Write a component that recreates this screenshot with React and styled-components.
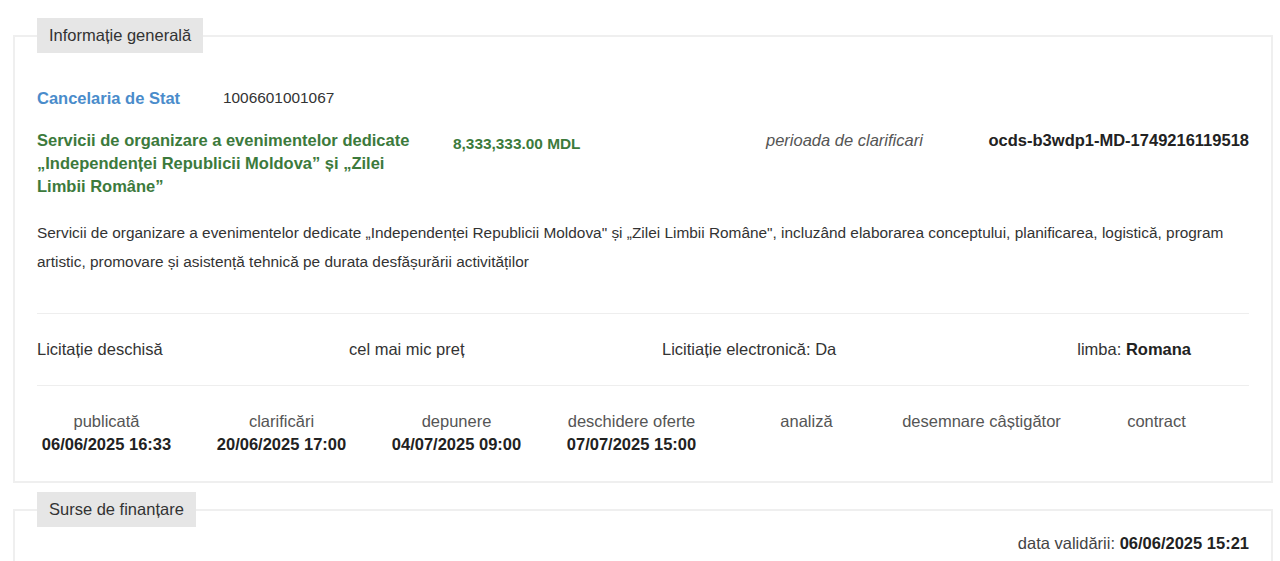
import React from "react";
import styled, { createGlobalStyle } from "styled-components";

const Global = createGlobalStyle`
  html, body { margin: 0; padding: 0; background: #fff; }
  body {
    font-family: "Liberation Sans", Arial, sans-serif;
    color: #333;
    font-size: 16.5px;
    overflow: hidden;
  }
`;

const Page = styled.div`
  padding: 18px 7px 0 13px;
  display: flex;
  flex-direction: column;
  gap: 9px;
`;

const Panel = styled.fieldset`
  margin: 0;
  min-width: 0;
  border: 2px solid #efefef;
  padding: ${(p) => p.$pad || "0 22px 25px 22px"};
`;

const Legend = styled.legend`
  background: #e6e6e6;
  color: #333;
  font-size: 16.5px;
  line-height: 19px;
  padding: 8px 12px;
  margin-left: 0;
`;

const OrgRow = styled.div`
  display: flex;
  align-items: center;
  margin-top: 34px;
  line-height: 22px;
`;

const OrgName = styled.a`
  color: #4a8ccb;
  font-weight: bold;
  text-decoration: none;
  width: 186px;
`;

const OrgCode = styled.span`
  color: #333;
  font-size: 15.4px;
`;

const TitleRow = styled.div`
  display: grid;
  grid-template-columns: 416px 313px 1fr auto;
  margin-top: 20px;
  line-height: 23px;
`;

const Title = styled.div`
  color: #3c7a3c;
  font-weight: bold;
  padding-right: 30px;
`;

const Amount = styled.div`
  color: #3c7a3c;
  font-weight: bold;
  font-size: 15.4px;
  padding-top: 3px;
`;

const Period = styled.div`
  font-style: italic;
  color: #555;
`;

const Ocid = styled.div`
  font-weight: bold;
  color: #222;
  text-align: right;
`;

const Description = styled.p`
  margin: 20px 0 0 0;
  font-size: 15.4px;
  line-height: 29px;
  color: #333;
`;

const InfoRow = styled.div`
  display: grid;
  grid-template-columns: 312px 313px 1fr auto;
  align-items: center;
  height: 71px;
  margin-top: 37px;
  border-top: 1px solid #eee;
  border-bottom: 1px solid #eee;
`;

const InfoCell = styled.div`
  padding-right: ${(p) => p.$pr || "0"};
  b { color: #222; }
`;

const Timeline = styled.div`
  display: grid;
  grid-template-columns: repeat(7, 175px);
  margin: 24px 0 0 -18px;
  line-height: 23px;
`;

const Step = styled.div`
  display: flex;
  flex-direction: column;
  align-items: center;
  text-align: center;
`;

const StepLabel = styled.span`
  color: #555;
`;

const StepDate = styled.span`
  font-weight: bold;
  color: #222;
  min-height: 23px;
`;

const Validated = styled.div`
  text-align: right;
  margin-top: 5px;
  line-height: 22px;
  color: #444;
  b { color: #222; }
`;

const steps = [
  ["publicată", "06/06/2025 16:33"],
  ["clarificări", "20/06/2025 17:00"],
  ["depunere", "04/07/2025 09:00"],
  ["deschidere oferte", "07/07/2025 15:00"],
  ["analiză", ""],
  ["desemnare câștigător", ""],
  ["contract", ""],
];

export default function App() {
  return (
    <>
      <Global />
      <Page>
        <Panel>
          <Legend>Informație generală</Legend>
          <OrgRow>
            <OrgName href="#">Cancelaria de Stat</OrgName>
            <OrgCode>1006601001067</OrgCode>
          </OrgRow>
          <TitleRow>
            <Title>
              Servicii de organizare a evenimentelor dedicate „Independenței Republicii Moldova” și „Zilei Limbii Române”
            </Title>
            <Amount>8,333,333.00 MDL</Amount>
            <Period>perioada de clarificari</Period>
            <Ocid>ocds-b3wdp1-MD-1749216119518</Ocid>
          </TitleRow>
          <Description>
            Servicii de organizare a evenimentelor dedicate „Independenței Republicii Moldova" și „Zilei Limbii Române", incluzând elaborarea conceptului, planificarea, logistică, program artistic, promovare și asistență tehnică pe durata desfășurării activităților
          </Description>
          <InfoRow>
            <InfoCell>Licitație deschisă</InfoCell>
            <InfoCell>cel mai mic preț</InfoCell>
            <InfoCell>Licitiație electronică: Da</InfoCell>
            <InfoCell $pr="58px">
              limba: <b>Romana</b>
            </InfoCell>
          </InfoRow>
          <Timeline>
            {steps.map(([label, date]) => (
              <Step key={label}>
                <StepLabel>{label}</StepLabel>
                <StepDate>{date}</StepDate>
              </Step>
            ))}
          </Timeline>
        </Panel>
        <Panel $pad="0 22px 40px 22px">
          <Legend>Surse de finanțare</Legend>
          <Validated>
            data validării: <b>06/06/2025 15:21</b>
          </Validated>
        </Panel>
      </Page>
    </>
  );
}
